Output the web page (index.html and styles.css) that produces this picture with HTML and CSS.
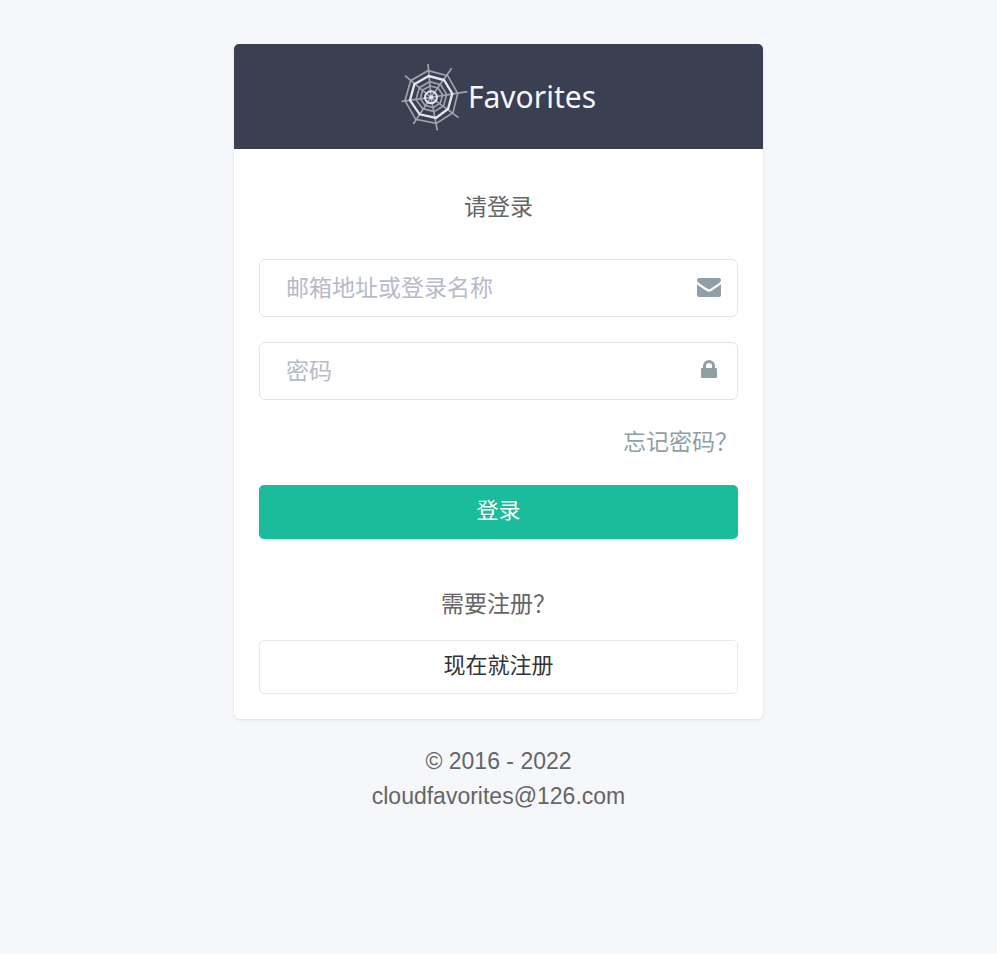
FILE: index.html
```html
<!DOCTYPE html>
<html lang="zh-CN">
<head>
    <meta charset="UTF-8">
    <meta name="viewport" content="width=device-width, initial-scale=1">
    <title>登录 - Favorites</title>
    <link rel="stylesheet" href="styles.css">
</head>
<body>
<div class="wrapper">
    <div class="panel">
        <!-- Logo -->
        <div class="panel-heading">
            <a class="logo" href="#">
                <svg class="logo-web" viewBox="16 12 201 204" aria-hidden="true">
                    <g class="web-thin">
                        <path d="M106 115L97 15M106 115L168 28M106 115L215 98M106 115L189 176M106 115L125 214M106 115L53 195M106 115L18 127M106 115L28 50"/>
                        <path d="M97 35L156 50L186 103L172 161L122 193L60 181L28 125L45 65Z"/>
                        <path d="M102 68L135 77L153 106L144 140L116 158L81 149L61 122L71 86Z"/>
                        <path d="M103 81L127 87L141 108L134 132L113 146L88 139L74 119L81 93Z"/>
                    </g>
                    <path class="web-bold" d="M99 51L145 63L170 104L157 150L121 177L72 166L43 124L56 76Z"/>
                    <circle class="web-hub" cx="106" cy="115" r="18"/>
                    <circle class="web-dot" cx="107" cy="115" r="6"/>
                </svg>
                <span class="logo-text">Favorites</span>
            </a>
        </div>
        <div class="panel-body">
            <p class="title">请登录</p>
            <form>
                <div class="form-group">
                    <input type="text" class="form-control" placeholder="邮箱地址或登录名称" aria-label="邮箱地址或登录名称">
                    <svg class="feedback" viewBox="0 0 24 24" aria-hidden="true">
                        <path d="M0 5Q0 3 2 3H22Q24 3 24 5C24 7 22 8 20 9.500L14 13.500Q12 15 10 13.500L4 9.500C2 8 0 7 0 5Z"/>
                        <path d="M0 9Q1 10 3 11.500L9 15.500Q12 18 15 15.500L21 11.500Q23 10 24 9V20Q24 22 22 22H2Q0 22 0 20Z"/>
                    </svg>
                </div>
                <div class="form-group">
                    <input type="password" class="form-control" placeholder="密码" aria-label="密码">
                    <svg class="feedback" viewBox="0 0 24 24" aria-hidden="true">
                        <path fill-rule="evenodd" d="M5 10H6V8A6 6 0 0 1 18 8V10H19Q20 10 20 11V19Q20 20 19 20H5Q4 20 4 19V11Q4 10 5 10ZM9 10H15V8A3 3 0 0 0 9 8Z"/>
                    </svg>
                </div>
                <div class="forgot">
                    <a href="#">忘记密码？</a>
                </div>
                <button type="submit" class="btn btn-primary">登录</button>
            </form>
            <p class="register">需要注册？</p>
            <a class="btn btn-default" href="#">现在就注册</a>
        </div>
    </div>
    <!-- Footer -->
    <div class="footer">
        <span>© 2016 - 2022</span>
        <br>
        <span>cloudfavorites@126.com</span>
    </div>
</div>
</body>
</html>
```
FILE: styles.css
```css
* {
    box-sizing: border-box;
}

body {
    margin: 0;
    background: #f5f7fa;
    color: #656565;
    font-family: "Liberation Sans", "Noto Sans CJK SC", sans-serif;
    font-size: 23px;
    line-height: 35px;
}

p {
    margin: 0;
}

a {
    text-decoration: none;
}

.wrapper {
    max-width: 529px;
    margin: 44px auto 0;
}

/* Login panel */
.panel {
    background: #fff;
    border-radius: 6px;
    box-shadow: 0 1px 3px rgba(0, 0, 0, 0.1);
}

.panel-heading {
    display: flex;
    justify-content: center;
    padding: 18px;
    background: #3a3f51;
    border-radius: 5px 5px 0 0;
}

.logo {
    display: flex;
    align-items: center;
    height: 69px;
    color: #f5f7fa;
}

.logo-web {
    width: 67px;
    height: 68px;
    fill: none;
    stroke: #e4e7ef;
}

.web-thin {
    stroke-width: 5;
    opacity: 0.6;
}

.web-bold {
    stroke-width: 7;
}

.web-hub {
    stroke-width: 6;
}

.web-dot {
    fill: #e4e7ef;
    stroke: none;
}

.logo-text {
    font-family: "Noto Sans", sans-serif;
    font-size: 30px;
}

.panel-body {
    padding: 25px;
    text-align: center;
}

.title {
    padding: 16px 0 34px;
}

/* Form */
.form-group {
    position: relative;
    margin-bottom: 25px;
}

.form-control {
    display: block;
    width: 100%;
    height: 58px;
    padding: 0 60px 0 26px;
    border: 1px solid #dde6e9;
    border-radius: 6px;
    background: #fff;
    color: #3a3f51;
    font: inherit;
    outline: none;
}

.form-control::placeholder {
    color: #b7bac9;
    opacity: 1;
}

/* Icon inside the right end of the field */
.feedback {
    position: absolute;
    top: 16px;
    right: 17px;
    width: 24px;
    height: 24px;
    fill: #909fa7;
}

.forgot {
    margin-bottom: 25px;
    text-align: right;
}

.forgot a {
    color: #909fa7;
}

.btn {
    display: block;
    width: 100%;
    height: 54px;
    padding: 0 0 2px;
    border: 1px solid transparent;
    border-radius: 5px;
    font-family: inherit;
    font-size: 22px;
    line-height: 50px;
    text-align: center;
    cursor: pointer;
}

.btn-primary {
    background: #1abc9c;
    color: #fff;
}

.btn-default {
    background: #fff;
    border-color: #e8e8e8;
    color: #333;
}

.register {
    padding: 48px 0 18px;
}

.footer {
    padding: 25px;
    text-align: center;
}
```
